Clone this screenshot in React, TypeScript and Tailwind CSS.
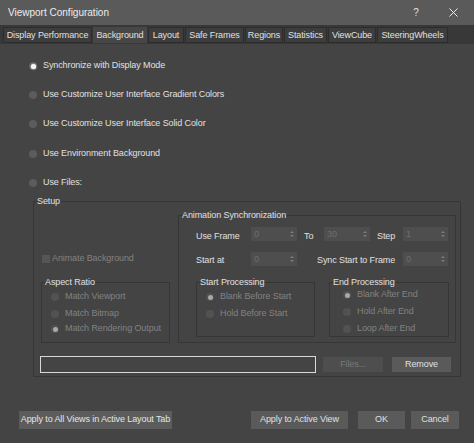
import React from "react";

function Radio({ checked = false, disabled = false }: { checked?: boolean; disabled?: boolean }) {
  return (
    <span
      className={
        "w-[8px] h-[8px] rounded-full flex items-center justify-center shrink-0 " +
        (disabled ? "bg-[#525252]" : "bg-[#5c5c5c]")
      }
    >
      {checked && (
        <span
          className={
            "w-[5px] h-[5px] rounded-full " +
            (disabled ? "bg-[#a8a8a8]" : "bg-[#f6f6f6] shadow-[0_0_2px_#ffffff]")
          }
        />
      )}
    </span>
  );
}

function Spin({ v, className }: { v: string; className: string }) {
  return (
    <div
      className={
        "h-[14px] bg-[#4e4e4e] flex items-center justify-between pl-[3px] pr-[3px] text-[#6f6f6f] " +
        className
      }
    >
      <span className="leading-[14px]">{v}</span>
      <svg width="4" height="8" viewBox="0 0 4 8">
        <path d="M0 3 L2 1 L4 3Z M0 5 L2 7 L4 5Z" fill="#7c7c7c" />
      </svg>
    </div>
  );
}

function Tab({ label, w, active = false }: { label: string; w: string; active?: boolean }) {
  return (
    <div
      className={
        "h-[16px] flex items-center justify-center border border-[#2c2c2c] leading-[14px] " +
        w +
        " " +
        (active ? "bg-[#474747] border-[#474747]" : "bg-[#3d3d3d]")
      }
    >
      {label}
    </div>
  );
}

export default function App() {
  const disabled = "text-[#828282]";
  return (
    <div className="w-[474px] h-[443px] bg-[#444444] flex flex-col overflow-hidden text-[9px] tracking-[-0.1px] text-[#e0e0e0] font-['Liberation_Sans',Arial,sans-serif]">
      {/* Title bar */}
      <div className="h-[25px] bg-[#5a5a5a] flex items-center pl-[8px] pr-[16px] text-[#ececec]">
        <span className="text-[10px] tracking-normal">Viewport Configuration</span>
        <span className="ml-auto w-[8px] text-center text-[10px] text-[#e0e0e0]">?</span>
        <svg className="ml-[29px]" width="9" height="9" viewBox="0 0 9 9">
          <path d="M0.5 0.5 L8.5 8.5 M8.5 0.5 L0.5 8.5" stroke="#e8e8e8" strokeWidth="1" />
        </svg>
      </div>

      {/* Tabs */}
      <div className="h-[19px] bg-[#383838] flex gap-[1px] pl-[3px] pt-[2px]">
        <Tab label="Display Performance" w="w-[89px]" />
        <Tab label="Background" w="w-[54px]" active />
        <Tab label="Layout" w="w-[36px]" />
        <Tab label="Safe Frames" w="w-[59px]" />
        <Tab label="Regions" w="w-[38px]" />
        <Tab label="Statistics" w="w-[43px]" />
        <Tab label="ViewCube" w="w-[48px]" />
        <Tab label="SteeringWheels" w="w-[71px]" />
      </div>

      {/* Content */}
      <div className="flex-1 flex flex-col">
        <div className="flex flex-col pt-[15px] pl-[29px]">
          <div className="h-[14px] flex items-center gap-[6px]">
            <Radio checked />
            <span>Synchronize with Display Mode</span>
          </div>
          <div className="h-[14px] mt-[15px] flex items-center gap-[6px]">
            <Radio />
            <span>Use Customize User Interface Gradient Colors</span>
          </div>
          <div className="h-[14px] mt-[15px] flex items-center gap-[6px]">
            <Radio />
            <span>Use Customize User Interface Solid Color</span>
          </div>
          <div className="h-[14px] mt-[16px] flex items-center gap-[6px]">
            <Radio />
            <span>Use Environment Background</span>
          </div>
          <div className="h-[14px] mt-[15px] flex items-center gap-[6px]">
            <Radio />
            <span>Use Files:</span>
          </div>
        </div>

        {/* Setup */}
        <fieldset className="mt-[5px] ml-[33px] w-[428px] border border-[#363636] p-0 m-0">
          <legend className="ml-[3px] leading-[12px] px-0">Setup</legend>
          <div className="flex">
            {/* left column */}
            <div className="w-[129px] ml-[7px] flex flex-col">
              <div className={"h-[12px] mt-[46px] flex items-center gap-[2px] pl-[1px] " + disabled}>
                <span className="w-[8px] h-[8px] bg-[#555555]" />
                <span>Animate Background</span>
              </div>
              <fieldset className="mt-[11px] border border-[#363636] p-0 m-0 pb-[7px]">
                <legend className="ml-[3px] leading-[12px]">Aspect Ratio</legend>
                <div className={"flex flex-col pl-[9px] mt-[3px] " + disabled}>
                  <div className="h-[12px] flex items-center gap-[6px]">
                    <Radio disabled />
                    <span>Match Viewport</span>
                  </div>
                  <div className="h-[12px] mt-[5px] flex items-center gap-[6px]">
                    <Radio disabled />
                    <span>Match Bitmap</span>
                  </div>
                  <div className="h-[12px] mt-[3px] flex items-center gap-[6px]">
                    <Radio disabled checked />
                    <span>Match Rendering Output</span>
                  </div>
                </div>
              </fieldset>
            </div>

            {/* Animation Synchronization */}
            <fieldset className="ml-[8px] mt-[2px] w-[278px] border border-[#363636] p-0 m-0 pb-[4px]">
              <legend className="ml-[3px] leading-[12px]">Animation Synchronization</legend>
              <div className="mt-[6px] pl-[17px] h-[14px] flex items-center">
                <span className="w-[55px] pt-[5px]">Use Frame</span>
                <Spin v="0" className="w-[46px]" />
                <span className="ml-[7px] w-[20px] pt-[5px]">To</span>
                <Spin v="30" className="w-[46px]" />
                <span className="ml-[7px] w-[26px] pt-[5px]">Step</span>
                <Spin v="1" className="w-[45px]" />
              </div>
              <div className="mt-[11px] pl-[17px] h-[14px] flex items-center">
                <span className="w-[55px] pt-[4px]">Start at</span>
                <Spin v="0" className="w-[46px]" />
                <span className="ml-[20px] w-[86px] pt-[4px]">Sync Start to Frame</span>
                <Spin v="0" className="w-[45px]" />
              </div>
              <div className="mt-[10px] ml-[17px] flex">
                <fieldset className="w-[119px] border border-[#363636] p-0 m-0">
                  <legend className="ml-[3px] leading-[12px]">Start Processing</legend>
                  <div className={"flex flex-col pl-[9px] mt-[3px] " + disabled}>
                    <div className="h-[12px] flex items-center gap-[6px]">
                      <Radio disabled checked />
                      <span>Blank Before Start</span>
                    </div>
                    <div className="h-[12px] mt-[5px] flex items-center gap-[6px]">
                      <Radio disabled />
                      <span>Hold Before Start</span>
                    </div>
                  </div>
                </fieldset>
                <fieldset className="ml-[14px] w-[120px] border border-[#363636] p-0 m-0 pb-[1px]">
                  <legend className="ml-[3px] leading-[12px]">End Processing</legend>
                  <div className={"flex flex-col pl-[13px] mt-[1px] " + disabled}>
                    <div className="h-[12px] flex items-center gap-[6px]">
                      <Radio disabled checked />
                      <span>Blank After End</span>
                    </div>
                    <div className="h-[12px] mt-[5px] flex items-center gap-[6px]">
                      <Radio disabled />
                      <span>Hold After End</span>
                    </div>
                    <div className="h-[12px] mt-[5px] flex items-center gap-[6px]">
                      <Radio disabled />
                      <span>Loop After End</span>
                    </div>
                  </div>
                </fieldset>
              </div>
            </fieldset>
          </div>

          {/* file row */}
          <div className="mt-[13px] ml-[6px] flex items-center pb-[3px]">
            <div className="w-[276px] h-[17px] border border-[#d8d8d8] bg-[#444444]" />
            <div className="ml-[7px] w-[60px] h-[15px] bg-[#4e4e4e] flex items-center justify-center text-[#7a7a7a]">
              Files...
            </div>
            <div className="ml-[9px] w-[59px] h-[15px] bg-[#5a5a5a] flex items-center justify-center">
              Remove
            </div>
          </div>
        </fieldset>

        {/* Bottom buttons */}
        <div className="mt-[34px] flex items-center">
          <div className="ml-[19px] w-[153px] h-[18px] bg-[#5c5c5c] flex items-center justify-center text-[#e6e6e6]">
            Apply to All Views in Active Layout Tab
          </div>
          <div className="ml-[79px] w-[97px] h-[18px] bg-[#5a5a5a] flex items-center justify-center">
            Apply to Active View
          </div>
          <div className="ml-[10px] w-[47px] h-[18px] bg-[#5a5a5a] flex items-center justify-center">
            OK
          </div>
          <div className="ml-[6px] w-[48px] h-[18px] bg-[#5a5a5a] flex items-center justify-center">
            Cancel
          </div>
        </div>
      </div>
    </div>
  );
}
